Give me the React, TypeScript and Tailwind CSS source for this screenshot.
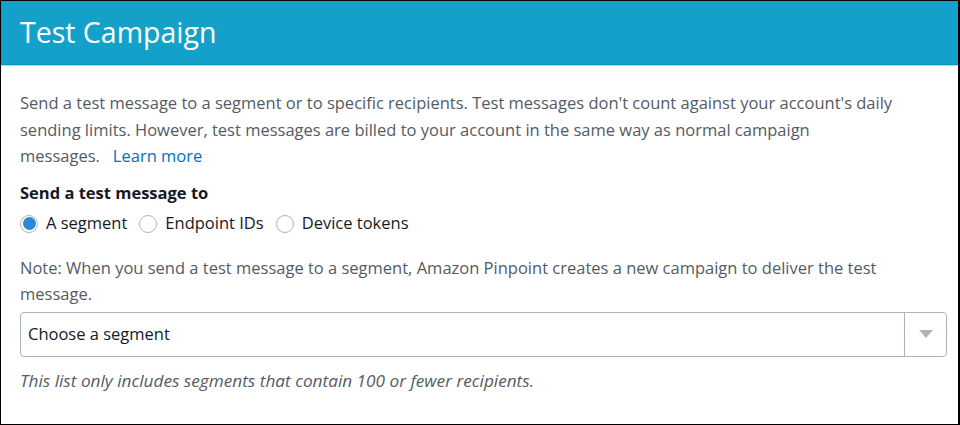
export default function App() {
  return (
    <div className="w-[960px] h-[425px] bg-white border-l border-t border-b border-r-2 border-black overflow-hidden font-['Open_Sans',sans-serif]">
      <div className="h-[64px] bg-[#14a1c9] border-b border-[#0a94c4] flex items-center px-[19px]">
        <h1 className="text-[28.5px] text-white leading-none font-medium">Test Campaign</h1>
      </div>
      <div className="h-px bg-[#a6e3f2]" />
      <div className="px-[19px] pt-[24px] text-[16.5px] text-[#545b64]">
        <p className="leading-[26.5px]">
          Send a test message to a segment or to specific recipients. Test messages don't count against your account's daily
          <br />
          sending limits. However, test messages are billed to your account in the same way as normal campaign
          <br />
          messages.<span className="inline-block w-[13px]" />
          <a className="text-[#0073bb]">Learn more</a>
        </p>
        <div className="mt-[11px] font-bold text-[#16191f] leading-[24px]">Send a test message to</div>
        <div className="flex items-center mt-[7px] h-[24px] text-[#16191f]">
          <label className="flex items-center gap-[8px] mr-[12px]">
            <span className="w-[18px] h-[18px] rounded-full border border-[#aab7b8] flex items-center justify-center bg-white">
              <span className="w-[13px] h-[13px] rounded-full bg-[#2b88d8]" />
            </span>
            A segment
          </label>
          <label className="flex items-center gap-[8px] mr-[12px]">
            <span className="w-[18px] h-[18px] rounded-full border border-[#aab7b8] bg-white" />
            Endpoint IDs
          </label>
          <label className="flex items-center gap-[8px]">
            <span className="w-[18px] h-[18px] rounded-full border border-[#aab7b8] bg-white" />
            Device tokens
          </label>
        </div>
        <p className="mt-[19px] leading-[26px]">
          Note: When you send a test message to a segment, Amazon Pinpoint creates a new campaign to deliver the test
          <br />
          message.
        </p>
        <div className="mt-[5px] w-[927px] h-[45px] border border-[#aab7b8] rounded-[4px] flex items-stretch">
          <div className="flex-1 flex items-center px-[7px] text-[#16191f]">Choose a segment</div>
          <div className="w-[42px] border-l border-[#aab7b8] flex items-center justify-center">
            <svg width="14" height="8" viewBox="0 0 14 8">
              <path d="M0 0 L14 0 L7 8 Z" fill="#aab7b8" />
            </svg>
          </div>
        </div>
        <p className="mt-[12px] italic text-[17.2px] leading-[24px]">This list only includes segments that contain 100 or fewer recipients.</p>
      </div>
    </div>
  );
}
